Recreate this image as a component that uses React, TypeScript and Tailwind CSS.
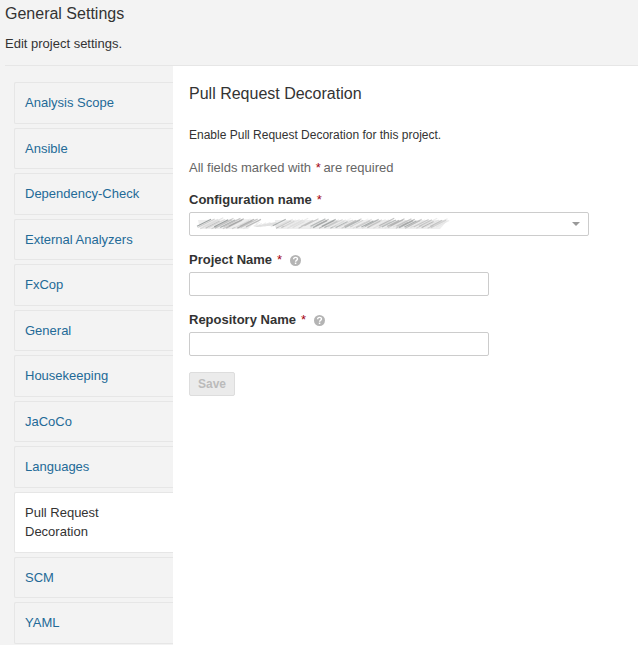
const tabs = [
  'Analysis Scope',
  'Ansible',
  'Dependency-Check',
  'External Analyzers',
  'FxCop',
  'General',
  'Housekeeping',
  'JaCoCo',
  'Languages',
  'Pull Request Decoration',
  'SCM',
  'YAML',
];

const greys = ['#8a9090', '#d5d5d5', '#b0b0b0', '#e2e2e2', '#9a9f9f', '#c8c8c8', '#b4b4b4', '#ededed', '#bdbdbd', '#a2a2a2', '#dddddd'];

function Redacted() {
  const strokes = Array.from({ length: 112 }, (_, i) => {
    const x = 8 + i * 2.15;
    const gap = x > 58 && x < 82;
    const tall = x <= 58;
    const jitter = ((i * 7) % 5) - 2;
    const length = gap ? 4 : (tall ? 15 : 13) + ((i * 3) % 4) - 1;
    return {
      x,
      y: (gap ? 9.5 : tall ? 11.5 : 11) + jitter * 0.6,
      length,
      color: gap ? '#e4e4e4' : greys[(i * 37 + ((i * i) % 13)) % 11],
      opacity: tall ? 0.8 : 0.65,
    };
  });
  return (
    <svg width="260" height="16" viewBox="0 0 260 16" aria-hidden="true">
      <defs>
        <filter id="smudge">
          <feGaussianBlur stdDeviation="0.65" />
        </filter>
      </defs>
      <g filter="url(#smudge)">
        <path d="M2 4 L62 3 L52 13 L4 13 Z M79 4 L252 4 L244 13 L80 13 Z" fill="#eeeeee" />
        <path d="M58 10 L80 6 L82 9 L61 11 Z" fill="#dedede" />
        {strokes.map((s, i) => (
          <line
            key={i}
            x1={s.x - s.length / 2}
            y1={s.y}
            x2={s.x + s.length / 2}
            y2={s.y - s.length * 0.5}
            stroke={s.color}
            strokeWidth="1.2"
            opacity={s.opacity}
          />
        ))}
      </g>
    </svg>
  );
}

function Required() {
  return <span className="ml-[5px] font-normal text-[#a4030f]">*</span>;
}

function Help() {
  return (
    <svg className="ml-2" width="11" height="11" viewBox="0 0 16 16" aria-hidden="true">
      <circle cx="8" cy="8" r="8" fill="#b4b4b4" />
      <path d="M5.3 6.1C5.3 2.5 10.9 2.7 10.9 5.9C10.9 8 8.1 7.7 8.1 9.8" fill="none" stroke="#fff" strokeWidth="2" />
      <rect x="7" y="11" width="2.2" height="2.2" fill="#fff" />
    </svg>
  );
}

function Field({ label }: { label: string }) {
  return (
    <div className="mb-[15px]">
      <label className="flex h-[18px] items-center font-bold">
        {label}
        <Required />
        <Help />
      </label>
      <input className="mt-[3px] block h-6 w-[300px] rounded-[2px] border border-[#cccccc] bg-white px-2 outline-none" />
    </div>
  );
}

export default function App() {
  return (
    <div className="flex h-[645px] w-[638px] flex-col overflow-hidden bg-[#f3f3f3] font-['Liberation_Sans',Arial,sans-serif] text-[13px] leading-5 text-[#333333]">
      <header className="ml-[5px] h-[66px] shrink-0 border-b border-[#e6e6e6] pt-1">
        <h1 className="text-base leading-5">General Settings</h1>
        <p className="mt-[10px]">Edit project settings.</p>
      </header>
      <div className="flex min-h-0 flex-1">
        <nav className="w-[173px] shrink-0 pl-[14px] pt-4">
          {tabs.map((tab) => (
            <a
              key={tab}
              className={
                tab === 'Pull Request Decoration'
                  ? 'mb-1 block rounded-l-[2px] border border-r-0 border-[#e6e6e6] bg-white py-[10px] pl-[10px] pr-10 leading-[19.5px]'
                  : 'mb-1 block rounded-l-[2px] border border-r-0 border-[#e6e6e6] py-[10px] pl-[10px] leading-[19.5px] text-[#236a97]'
              }
            >
              {tab}
            </a>
          ))}
        </nav>
        <main className="flex-1 bg-white pl-4 pt-[18px]">
          <h2 className="text-base leading-5">Pull Request Decoration</h2>
          <p className="mt-[21px] text-xs leading-5">Enable Pull Request Decoration for this project.</p>
          <p className="mt-[13px] text-[#666666]">
            All fields marked with <span className="ml-px -mr-px text-[#a4030f]">*</span> are required
          </p>
          <div className="mb-[15px] mt-3">
            <label className="flex h-5 items-center font-bold">
              Configuration name
              <Required />
            </label>
            <div className="mt-0.5 flex h-6 w-[400px] items-center justify-between rounded-[2px] border border-[#cccccc] pl-[6px] pr-2">
              <Redacted />
              <svg width="8" height="4" viewBox="0 0 8 4" aria-hidden="true">
                <path d="M0 0H8L4 4Z" fill="#999999" />
              </svg>
            </div>
          </div>
          <Field label="Project Name" />
          <Field label="Repository Name" />
          <button className="mt-4 block h-6 w-[46px] rounded-[2px] border border-[#dddddd] bg-[#ebebeb] text-xs font-bold leading-[22px] text-[#bbbbbb]">
            Save
          </button>
        </main>
      </div>
    </div>
  );
}
